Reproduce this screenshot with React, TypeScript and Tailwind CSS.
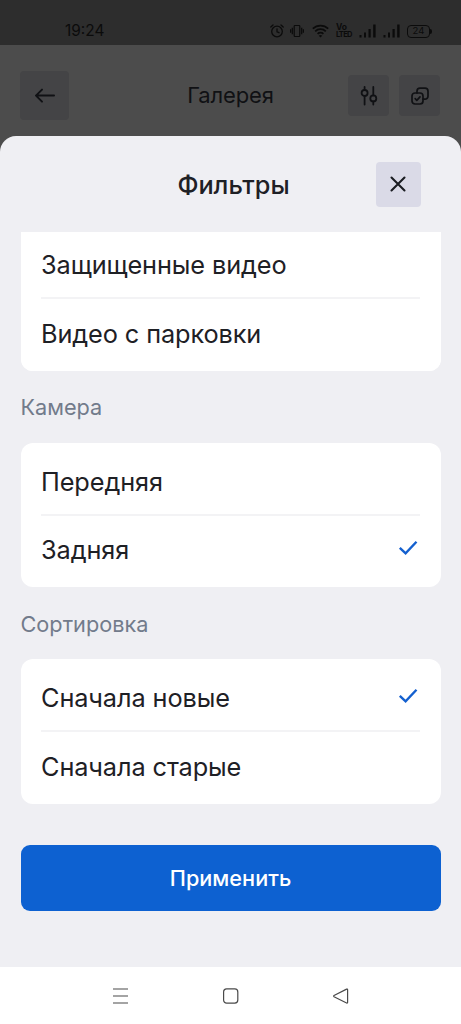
import type { ReactNode } from "react";

type Option = {
  label: string;
  checked?: boolean;
};

const recordOptions: Option[] = [
  { label: "Защищенные видео" },
  { label: "Видео с парковки" },
];

const cameraOptions: Option[] = [
  { label: "Передняя" },
  { label: "Задняя", checked: true },
];

const sortOptions: Option[] = [
  { label: "Сначала новые", checked: true },
  { label: "Сначала старые" },
];

function Signal() {
  return (
    <svg className="w-[18px] h-[14px]" viewBox="0 0 18 14" fill="currentColor">
      <rect x="0.5" y="11" width="2" height="2.5" />
      <rect x="5" y="8.5" width="2" height="5" />
      <rect x="9.5" y="5" width="2.2" height="8.5" />
      <rect x="14.2" y="0.5" width="2.4" height="13" />
    </svg>
  );
}

function StatusBar() {
  return (
    <div className="h-[45px] bg-[#2d2d2d] text-[#0b0b0b] flex items-end justify-between pl-[65px] pr-[29px] pb-[5px]">
      <span className="text-[15.4px] leading-[18px]">19:24</span>

      <div className="flex items-center h-[18px]">
        {/* ALARM */}
        <svg className="w-[14px] h-[14px] mr-[6px]" viewBox="0 0 14 14" fill="none" stroke="currentColor" strokeWidth="1.3" strokeLinecap="round">
          <circle cx="7" cy="7.5" r="5.3" />
          <path d="M7 4.8v3l2 .9M.8 3 3 1M13.2 3 11 1" />
        </svg>

        {/* VIBRATE */}
        <svg className="w-[14px] h-[14px] mr-[8px]" viewBox="0 0 14 14" fill="none" stroke="currentColor" strokeWidth="1.2">
          <rect x="4.2" y="1.5" width="5.6" height="11" rx="0.8" />
          <path d="M2.3 3.8v6.4M11.7 3.8v6.4M.6 5.2v3.6M13.4 5.2v3.6" />
        </svg>

        {/* WIFI */}
        <svg className="w-[17px] h-[14px] mr-[7px]" viewBox="0 0 17 14" fill="none" stroke="currentColor" strokeWidth="1.7">
          <path d="M.8 4.7a11 11 0 0 1 15.4 0M3.2 7.4a7.5 7.5 0 0 1 10.6 0M5.6 9.9a4.1 4.1 0 0 1 5.8 0" />
          <path d="M8.5 13.6 6.8 11.8a2.5 2.5 0 0 1 3.4 0z" fill="currentColor" stroke="none" />
        </svg>

        <div className="w-[16px] mr-[7px] flex flex-col font-bold text-[8.5px] leading-[7px]">
          <span>Vo</span>
          <span className="text-[7.5px] tracking-[-0.7px]">LTED</span>
        </div>

        <div className="flex gap-[6px] mr-[6px]">
          <Signal />
          <Signal />
        </div>

        {/* BATTERY */}
        <div className="flex items-center">
          <div className="w-[23px] h-[13px] rounded-[4px] border-[1.5px] border-current flex items-center justify-center text-[9.5px] leading-none">
            24
          </div>
          <div className="w-[2px] h-[5px] rounded-r bg-current" />
        </div>
      </div>
    </div>
  );
}

function GalleryHeader() {
  return (
    <div className="h-[91px] pt-[26px] pl-5 pr-[21px] flex items-start justify-between text-[#101114] relative">
      <button className="w-[49px] h-[49px] rounded bg-[#444446] flex items-center justify-center">
        <svg className="w-6 h-6" viewBox="0 0 24 24" fill="none" stroke="currentColor" strokeWidth="2" strokeLinecap="round" strokeLinejoin="round">
          <path d="M21 11.6H3M9 5.6l-6 6 6 6" />
        </svg>
      </button>

      <h1 className="absolute inset-x-0 top-[34px] text-center text-[22px] leading-8 tracking-[-0.1px]">
        Галерея
      </h1>

      <div className="flex gap-[10px] pt-[4px]">
        <button className="w-[41px] h-[41px] rounded bg-[#444446] flex items-center justify-center">
          <svg className="w-5 h-5" viewBox="0 0 20 20" fill="none" stroke="currentColor" strokeWidth="1.8" strokeLinecap="round">
            <circle cx="5.6" cy="7" r="3" />
            <circle cx="14.3" cy="12.4" r="3" />
            <path d="M5.6 1v3M5.6 10v8.6M14.3 1v8.4M14.3 15.4v3.2" />
          </svg>
        </button>
        <button className="w-[41px] h-[41px] rounded bg-[#444446] flex items-center justify-center">
          <svg className="w-5 h-5" viewBox="0 0 20 20" fill="none" stroke="currentColor" strokeWidth="1.7" strokeLinecap="round" strokeLinejoin="round">
            <rect x="2" y="7" width="11" height="11" rx="3" />
            <path d="M7 7V5.2a3 3 0 0 1 3-3h5a3 3 0 0 1 3 3v5a3 3 0 0 1-3 3h-2" />
            <path d="m5.2 12.7 1.6 1.6 3.2-3.4" />
          </svg>
        </button>
      </div>
    </div>
  );
}

function OptionCard({ options }: { options: Option[] }) {
  return (
    <div className="h-[144.5px] shrink-0 rounded-xl bg-white px-[20.5px] pt-1 flex flex-col">
      {options.map((option, index) => (
        <div
          key={option.label}
          className={
            index === 0
              ? "h-[67px] flex items-center justify-between"
              : "h-[68px] border-t-2 border-[#f3f3f5] flex items-center justify-between"
          }
        >
          <span className="text-[25.3px] tracking-[-0.1px] text-[#1e2025] pt-[3px]">{option.label}</span>
          {option.checked && (
            <svg className="w-[20px] h-[16px] mr-[2px] mb-px" viewBox="0 0 20 16" fill="none" stroke="#1460cf" strokeWidth="2.4">
              <path d="m1.8 7.8 5.8 5.6L18.5 1.8" />
            </svg>
          )}
        </div>
      ))}
    </div>
  );
}

function SectionTitle({ children }: { children: ReactNode }) {
  return (
    <h3 className="h-[72px] shrink-0 flex items-center text-[21.7px] text-[#727b8b] pt-[2px]">
      {children}
    </h3>
  );
}

function FilterSheet() {
  return (
    <div className="h-[831px] rounded-t-[16px] bg-[#efeff3] px-[20.5px] flex flex-col">
      <div className="h-24 shrink-0 relative flex items-center justify-end pr-[20px]">
        <h2 className="absolute left-[6px] right-0 top-[33px] text-center text-[25.3px] font-medium leading-8 text-[#1e2025]">
          Фильтры
        </h2>
        <button className="relative w-[45px] h-[45px] rounded-[4px] bg-[#dadae7] flex items-center justify-center">
          <svg className="w-4 h-4" viewBox="0 0 16 16" fill="none" stroke="#1a1c22" strokeWidth="2.1" strokeLinecap="round">
            <path d="m1.5 1.5 13 13M14.5 1.5l-13 13" />
          </svg>
        </button>
      </div>

      {/* Scrolled list, the first card runs under the header */}
      <div className="h-[572px] shrink-0 overflow-hidden">
        <div className="flex flex-col mt-[-6px]">
          <div className="bg-white rounded-b-xl">
            <OptionCard options={recordOptions} />
          </div>
          <SectionTitle>Камера</SectionTitle>
          <OptionCard options={cameraOptions} />
          <SectionTitle>Сортировка</SectionTitle>
          <OptionCard options={sortOptions} />
        </div>
      </div>

      <button className="mt-[41px] h-[66px] shrink-0 rounded-[9px] bg-[#0d61d1] text-white text-[21.7px] font-medium pt-px">
        Применить
      </button>
    </div>
  );
}

function NavBar() {
  return (
    <div className="h-[57px] bg-white flex items-center justify-center gap-[94px] text-[#4a4a4a]">
      <svg className="w-4 h-4" viewBox="0 0 16 16" fill="none" stroke="currentColor" strokeWidth="1.2">
        <path d="M0 1h15M0 8h15M0 15h15" />
      </svg>
      <svg className="w-4 h-4" viewBox="0 0 16 16" fill="none" stroke="currentColor" strokeWidth="1.2">
        <rect x="0.6" y="0.9" width="14.2" height="14.2" rx="3" />
      </svg>
      <svg className="w-4 h-4" viewBox="0 0 16 16" fill="none" stroke="currentColor" strokeWidth="1.2" strokeLinejoin="round">
        <path d="M13.6 1.1 1 7.5a.7.7 0 0 0 0 1.2l12.6 6.3a.7.7 0 0 0 1-.6V1.7a.7.7 0 0 0-1-.6z" />
      </svg>
    </div>
  );
}

export default function App() {
  return (
    <div className="w-full h-screen overflow-hidden bg-[#4c4c4c] font-['Inter',sans-serif]">
      <StatusBar />
      <GalleryHeader />
      <FilterSheet />
      <NavBar />
    </div>
  );
}
